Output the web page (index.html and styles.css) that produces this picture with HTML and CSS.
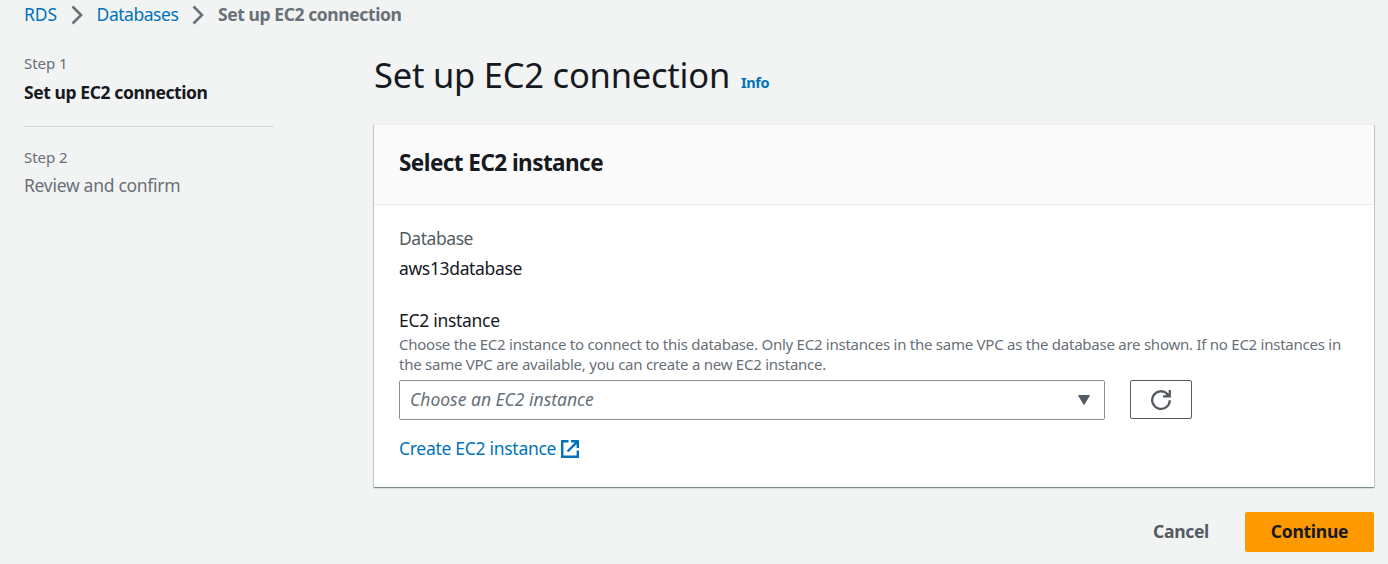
FILE: index.html
```
<!DOCTYPE html>
<html lang="en">
<head>
<meta charset="utf-8">
<title>Set up EC2 connection</title>
<link rel="stylesheet" href="styles.css">
</head>
<body>
<nav class="breadcrumbs">
  <a class="link">RDS</a>
  <svg class="chevron" viewBox="0 0 12 20"><path d="M1.5 1.5 10 10 1.5 18.5"/></svg>
  <a class="link databases">Databases</a>
  <svg class="chevron" viewBox="0 0 12 20"><path d="M1.5 1.5 10 10 1.5 18.5"/></svg>
  <span class="current">Set up EC2 connection</span>
</nav>
<div class="layout">
  <aside class="steps">
    <div class="step active">
      <div class="step-number">Step 1</div>
      <div class="step-name">Set up EC2 connection</div>
    </div>
    <div class="step">
      <div class="step-number">Step 2</div>
      <div class="step-name">Review and confirm</div>
    </div>
  </aside>
  <main class="content">
    <header class="page-header">
      <h1 class="title">Set up EC2 connection</h1>
      <a class="info">Info</a>
    </header>
    <section class="card">
      <div class="card-header"><h2 class="card-title">Select EC2 instance</h2></div>
      <div class="card-body">
        <div class="label">Database</div>
        <div class="value">aws13database</div>
        <div class="field-label">EC2 instance</div>
        <div class="help">Choose the EC2 instance to connect to this database. Only EC2 instances in the same VPC as the database are shown. If no EC2 instances in<br>the same VPC are available, you can create a new EC2 instance.</div>
        <div class="control-row">
          <div class="select"><span class="placeholder">Choose an EC2 instance</span>
            <svg class="caret" viewBox="0 0 14 12"><path d="M1.5 1.5h11L7 10.5z"/></svg>
          </div>
          <button class="refresh" aria-label="Refresh">
            <svg class="refresh-icon" viewBox="0 0 22 22"><path d="M19.8 11.2a8.8 8.8 0 1 1-2.6-6.4L19 6.6M19.8 1v6.3H13M15.8 5.6h3.5"/></svg>
          </button>
        </div>
        <a class="create">Create EC2 instance
          <svg class="external" viewBox="0 0 18 18"><path d="M7.5 1.2H1.2v15.6h15.6v-6.3M10 1.2h6.8V8M16.2 1.8 6.5 11.5"/></svg>
        </a>
      </div>
    </section>
    <footer class="actions">
      <button class="cancel">Cancel</button>
      <button class="continue">Continue</button>
    </footer>
  </main>
</div>
</body>
</html>
```
FILE: styles.css
```
* { box-sizing: border-box; }
body {
  margin: 0;
  height: 564px;
  overflow: hidden;
  background: #f2f3f3;
  color: #16191f;
  font: 17.5px/28px "Noto Sans", sans-serif;
  letter-spacing: -0.29px;
}
h1, h2 { margin: 0; }
svg { display: block; flex: none; fill: none; }
button { font: inherit; letter-spacing: inherit; border-radius: 2px; padding: 0; border: 0; background: none; }
.breadcrumbs { display: flex; align-items: center; height: 28px; padding-left: 24px; }
.link { color: #0073bb; letter-spacing: -0.09px; }
.databases { letter-spacing: -0.47px; }
.chevron { width: 12px; height: 20px; margin: 2px 13.6px 0 14px; stroke: #687078; stroke-width: 2.6; }
.current { font-weight: 700; color: #687078; letter-spacing: -0.41px; }
.layout { display: flex; }
.steps { width: 250px; margin-left: 24px; padding-top: 21px; color: #687078; }
.step { height: 94px; }
.step.active { height: 78px; border-bottom: 1px solid #d5dbdb; margin-bottom: 16px; }
.step-number { font-size: 15px; letter-spacing: -0.05px; }
.active .step-name { margin-top: 1px; font-weight: 700; color: #16191f; letter-spacing: -0.41px; }
.content { width: 1000px; margin-left: 100px; }
.page-header { display: flex; align-items: baseline; height: 96px; padding-top: 22px; }
.title { font-size: 34.5px; line-height: 50px; font-weight: 400; letter-spacing: -0.22px; }
.info { margin-left: 11px; font-size: 14.5px; font-weight: 700; color: #0073bb; letter-spacing: -0.44px; }
.card { height: 363px; background: #fff; box-shadow: 0 1px 1px 0 rgba(0,28,36,.3), 1px 1px 1px 0 rgba(0,28,36,.15), -1px 1px 1px 0 rgba(0,28,36,.15); border-top: 1px solid #eaeded; }
.card-header { height: 80px; background: #fafafa; border-bottom: 1px solid #eaeded; padding: 24px 25px; }
.card-title { font-size: 22.5px; line-height: 28px; letter-spacing: -0.55px; }
.card-body { padding: 19px 25px; }
.label { color: #545b64; letter-spacing: -0.44px; }
.value { margin-top: 2px; letter-spacing: -0.35px; }
.field-label { margin-top: 25px; line-height: 26px; }
.help { margin-top: 1px; font-size: 15px; line-height: 20px; color: #687078; white-space: nowrap; letter-spacing: -0.25px; }
.control-row { display: flex; gap: 25px; margin-top: 6px; }
.select { display: flex; justify-content: space-between; align-items: center; width: 706px; height: 40px; padding: 0 13px 0 10px; border: 1px solid #879596; border-radius: 2px; }
.placeholder { padding-bottom: 2px; font-style: italic; color: #687078; letter-spacing: 0; }
.caret { width: 14px; height: 12px; fill: #545b64; stroke: #545b64; stroke-linejoin: round; }
.refresh { display: flex; align-items: center; justify-content: center; width: 62px; height: 39px; border: 1px solid #545b64; background: #fff; }
.refresh-icon { width: 22px; height: 22px; margin-top: 1px; stroke: #545b64; stroke-width: 2.3; }
.create { display: flex; align-items: center; margin-top: 14px; color: #0073bb; }
.external { width: 18px; height: 18px; margin: 2px 0 0 5px; stroke: #0073bb; stroke-width: 2.4; }
.actions { display: flex; justify-content: flex-end; margin-top: 25px; line-height: 38px; }
.cancel { width: 56px; height: 40px; margin-right: 36px; color: #545b64; }
.continue { width: 129px; height: 40px; background: #ff9900; color: #16191f; letter-spacing: -0.25px; }
.actions button { font-weight: 700; white-space: nowrap; padding-bottom: 2px; }
```
